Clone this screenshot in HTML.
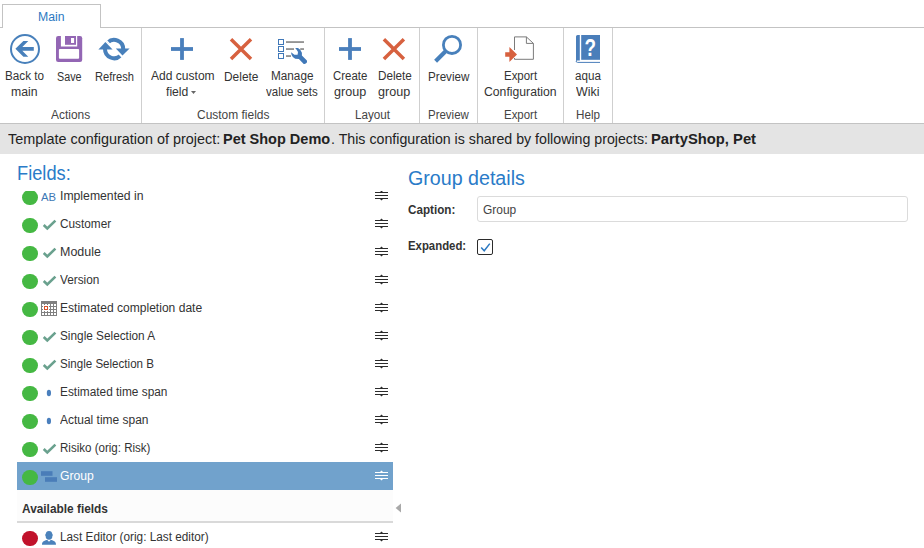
<!DOCTYPE html>
<html><head><meta charset="utf-8"><title>Template configuration</title>
<style>
*{box-sizing:border-box;margin:0;padding:0}
html,body{width:924px;height:548px;overflow:hidden;background:#fff}
body{font-family:"Liberation Sans",sans-serif;font-size:12px;color:#333;position:relative}
.abs{position:absolute}
#tabline{left:0;top:27px;width:924px;height:1px;background:#c3c3c3}
#tab{left:2px;top:4px;width:99px;height:24px;border:1px solid #c3c3c3;border-bottom:none;background:#fff}
.sep{position:absolute;top:28px;width:1px;height:95px;background:#cfcfcf}
.ico{position:absolute;overflow:visible}
#banner{left:0;top:123px;width:924px;height:31px;background:#e4e4e4;border-top:1px solid #c3c3c3}
.t{position:absolute;white-space:nowrap;transform-origin:0 50%;color:#333}
#list{position:absolute;left:17px;top:191px;width:376px;height:357px;overflow:hidden}
#list .in{position:absolute;left:-17px;top:-191px;width:924px;height:548px}
.row{position:absolute;left:17px;width:376px;height:28px}
.row .dot{position:absolute;left:5.4px;top:7.5px;width:15.3px;height:15.3px;border-radius:50%;background:#45b843}
.row .dot.red{background:#c1122b}
.row svg.ti{position:absolute;left:23px;top:6px;width:18px;height:18px;overflow:visible}
.row svg.hd{position:absolute;left:357px;top:7px;width:15px;height:14px;overflow:visible}
.row.sel{background:#71a2cc}
</style></head><body>
<div id="tabline" class="abs"></div><div id="tab" class="abs"></div>
<span class="t" style="left:38.22px;top:8.64px;font-size:12px;line-height:16px;transform:scaleX(1.0209);color:#2b79c2">Main</span>
<div class="sep" style="left:141px"></div>
<div class="sep" style="left:324px"></div>
<div class="sep" style="left:419px"></div>
<div class="sep" style="left:477px"></div>
<div class="sep" style="left:563px"></div>
<div class="sep" style="left:612px"></div>
<svg class="ico" style="left:0;top:28px" width="620" height="42" viewBox="0 28 620 42">
<g fill="#4880bb">
<circle cx="25" cy="49" r="14" fill="none" stroke="#4880bb" stroke-width="2"/>
<path d="M15.4 48.85 L23.4 41 L28.3 41 L22.3 47 L33.8 47 L33.8 50.7 L22.3 50.7 L28.3 56.7 L23.4 56.7 Z"/>
</g>
<g>
<rect x="56" y="36" width="26.2" height="26" rx="2.2" fill="#9366b4"/>
<rect x="60.9" y="35.5" width="16.3" height="11" fill="#fff"/>
<rect x="65" y="36" width="11" height="8.8" fill="#9366b4"/>
<rect x="71" y="38" width="3.1" height="5" fill="#fff"/>
<rect x="58.9" y="49.1" width="20.2" height="9.7" rx="1" fill="#fff"/>
</g>
<g fill="#4880bb">
<path d="M107.7 42.6 A9.1 9.1 0 0 1 123.2 49.1" fill="none" stroke="#4880bb" stroke-width="4"/>
<path d="M120.5 55.6 A9.1 9.1 0 0 1 105 49.1" fill="none" stroke="#4880bb" stroke-width="4"/>
<path d="M98.4 49.6 L105.4 42 L112.6 49.6 Z"/>
<path d="M115.8 48.4 L129.6 48.4 L122.5 55.4 Z"/>
<path d="M105.4 39.6 L122.4 57.4" stroke="#fff" stroke-width="1.4" fill="none"/>
</g>
<g fill="#4a7fbc">
<rect x="171" y="47.1" width="22" height="3.8"/><rect x="180.1" y="38.1" width="3.8" height="21.8"/>
<rect x="339" y="47.1" width="22" height="3.8"/><rect x="348.1" y="38.1" width="3.8" height="21.8"/>
</g>
<g stroke="#d7613f" stroke-width="3.5" fill="none">
<path d="M231 39.2 L251 58.9 M251 39.2 L231 58.9"/>
<path d="M383.9 39.2 L403.9 58.9 M403.9 39.2 L383.9 58.9"/>
</g>
<g>
<g fill="#fff" stroke="#4078b8" stroke-width="1"><rect x="278.5" y="39.5" width="5" height="5"/><rect x="278.5" y="46.5" width="5" height="5"/><rect x="278.5" y="53.5" width="5" height="5"/></g>
<g fill="#7b7b7b"><rect x="286" y="41.3" width="18" height="1.5"/><rect x="286" y="48.3" width="8" height="1.5"/><rect x="300.2" y="48.3" width="3.8" height="1.5"/><rect x="286" y="55.3" width="5" height="1.5"/></g>
<path fill="#4078b8" d="M295.2 48 L298 48 Q300.5 49 301.9 52.8 L301.9 55.6 L306.9 60.5 Q307.6 62.5 306.1 63.3 Q304.8 64.5 303.7 63.9 L298.9 59 L295.2 58.7 Q292.8 58 291.6 55 L291 52.2 L294.4 54.8 L297.6 54.8 L298 52 L296.8 50 Z"/>
</g>
<g>
<circle cx="452" cy="44.9" r="8.6" fill="none" stroke="#4880bb" stroke-width="2.8"/>
<path d="M445.6 51.3 L435.6 61.3" stroke="#4880bb" stroke-width="4.2" fill="none"/>
</g>
<g>
<path d="M514.5 50 V36.9 H526.4 L533.4 43.4 V59.3 H514.5 V58" fill="none" stroke="#7b7b7b" stroke-width="1"/>
<path d="M526.4 36.9 V43.4 H533.4" fill="none" stroke="#7b7b7b" stroke-width="1"/>
<path fill="#d7613f" d="M505.2 52.2 H509.4 V47 L517 54.45 L509.4 61.9 V56.7 H505.2 Z"/>
</g>
<g>
<path fill="#4a7eba" d="M577.6 35 H579.8 V60.5 H577.2 Q576 60.5 576 62 V36.6 Q576 35 577.6 35 Z"/>
<rect x="581.2" y="35" width="18.8" height="24.8" fill="#4a7eba"/>
<path d="M600 62.4 H577.6 Q576.1 62.4 576.1 61" fill="none" stroke="#4a7eba" stroke-width="1"/>
<text x="590.2" y="56.2" text-anchor="middle" font-family="Liberation Sans, sans-serif" font-weight="bold" font-size="23" fill="#fff" transform="translate(590.2 0) scale(.82 1) translate(-590.2 0)">?</text>
</g>
</svg>

<span class="t" style="left:5.22px;top:67.84px;font-size:12px;line-height:16px;transform:scaleX(0.9757)">Back to</span>
<span class="t" style="left:11.22px;top:84.24px;font-size:12px;line-height:16px;transform:scaleX(1.0209)">main</span>
<span class="t" style="left:56.62px;top:68.54px;font-size:12px;line-height:16px;transform:scaleX(0.8977)">Save</span>
<span class="t" style="left:95.02px;top:68.54px;font-size:12px;line-height:16px;transform:scaleX(0.9246)">Refresh</span>
<span class="t" style="left:150.82px;top:67.84px;font-size:12px;line-height:16px;transform:scaleX(1.0045)">Add custom</span>
<span class="t" style="left:165.82px;top:83.84px;font-size:12px;line-height:16px;transform:scaleX(1.0156)">field</span>
<span class="t" style="left:224.22px;top:68.54px;font-size:12px;line-height:16px;transform:scaleX(0.9934)">Delete</span>
<span class="t" style="left:271.12px;top:67.84px;font-size:12px;line-height:16px;transform:scaleX(0.9789)">Manage</span>
<span class="t" style="left:266.02px;top:83.84px;font-size:12px;line-height:16px;transform:scaleX(0.9580)">value sets</span>
<span class="t" style="left:333.02px;top:67.84px;font-size:12px;line-height:16px;transform:scaleX(0.9508)">Create</span>
<span class="t" style="left:333.72px;top:83.84px;font-size:12px;line-height:16px;transform:scaleX(1.0475)">group</span>
<span class="t" style="left:377.52px;top:67.84px;font-size:12px;line-height:16px;transform:scaleX(0.9761)">Delete</span>
<span class="t" style="left:378.02px;top:83.84px;font-size:12px;line-height:16px;transform:scaleX(1.0475)">group</span>
<span class="t" style="left:427.72px;top:68.54px;font-size:12px;line-height:16px;transform:scaleX(0.9689)">Preview</span>
<span class="t" style="left:504.12px;top:67.84px;font-size:12px;line-height:16px;transform:scaleX(0.9531)">Export</span>
<span class="t" style="left:483.92px;top:83.84px;font-size:12px;line-height:16px;transform:scaleX(1.0178)">Configuration</span>
<span class="t" style="left:574.82px;top:67.84px;font-size:12px;line-height:16px;transform:scaleX(0.9684)">aqua</span>
<span class="t" style="left:576.02px;top:83.84px;font-size:12px;line-height:16px;transform:scaleX(1.0348)">Wiki</span>
<svg class="abs" style="left:191px;top:91px" width="5" height="3" viewBox="0 0 5 3"><path d="M0 0H5L2.5 3Z" fill="#666"/></svg>
<span class="t" style="left:50.62px;top:107.04px;font-size:12px;line-height:16px;transform:scaleX(0.9949);color:#444">Actions</span>
<span class="t" style="left:197.12px;top:107.04px;font-size:12px;line-height:16px;transform:scaleX(0.9967);color:#444">Custom fields</span>
<span class="t" style="left:354.72px;top:107.04px;font-size:12px;line-height:16px;transform:scaleX(0.9730);color:#444">Layout</span>
<span class="t" style="left:428.22px;top:107.04px;font-size:12px;line-height:16px;transform:scaleX(0.9572);color:#444">Preview</span>
<span class="t" style="left:504.12px;top:107.04px;font-size:12px;line-height:16px;transform:scaleX(0.9531);color:#444">Export</span>
<span class="t" style="left:576.02px;top:107.04px;font-size:12px;line-height:16px;transform:scaleX(0.9705);color:#444">Help</span>
<div id="banner" class="abs"></div>
<span class="t" style="left:7.83px;top:130.05px;font-size:14.3px;line-height:19px;transform:scaleX(1.0078);color:#222">Template configuration of project:</span>
<span class="t" style="left:223.23px;top:130.05px;font-size:14.3px;line-height:19px;transform:scaleX(1.0141);font-weight:bold;color:#222">Pet Shop Demo</span>
<span class="t" style="left:330.63px;top:130.05px;font-size:14.3px;line-height:19px;transform:scaleX(0.9929);color:#222">. This configuration is shared by following projects:</span>
<span class="t" style="left:650.93px;top:130.05px;font-size:14.3px;line-height:19px;transform:scaleX(1.0328);font-weight:bold;color:#222">PartyShop, Pet</span>
<span class="t" style="left:17.02px;top:159.84px;font-size:19.5px;line-height:26px;transform:scaleX(0.9360);color:#2a7bc8">Fields:</span>
<span class="t" style="left:408.02px;top:164.84px;font-size:19.5px;line-height:26px;transform:scaleX(1.0075);color:#2a7bc8">Group details</span>
<div id="list"><div class="in">
<div class="row" style="top:182px"><i class="dot"></i><svg class="hd" viewBox="0 0 15 14"><g fill="#2c2c2c"><rect x="1" y="3" width="13" height="1"/><rect x="1" y="6" width="13" height="1"/><rect x="1" y="9" width="13" height="1"/><path d="M6 3 L7.5 1.6 L9 3Z"/><path d="M6 10 L7.5 11.6 L9 10Z"/></g></svg></div><span class="t" style="left:41.36px;top:189.59px;font-size:11px;line-height:15px;transform:scaleX(1.0267);color:#3d78b5">AB</span><span class="t" style="left:60.02px;top:187.84px;font-size:12px;line-height:16px;transform:scaleX(1.0184)">Implemented in</span>
<div class="row" style="top:210px"><i class="dot"></i><svg class="ti" viewBox="0 0 18 18"><path d="M3.7 9.0 L7.3 12.5 L15.4 4.6" fill="none" stroke="#6aa18e" stroke-width="2.6"/></svg><svg class="hd" viewBox="0 0 15 14"><g fill="#2c2c2c"><rect x="1" y="3" width="13" height="1"/><rect x="1" y="6" width="13" height="1"/><rect x="1" y="9" width="13" height="1"/><path d="M6 3 L7.5 1.6 L9 3Z"/><path d="M6 10 L7.5 11.6 L9 10Z"/></g></svg></div><span class="t" style="left:60.02px;top:215.84px;font-size:12px;line-height:16px;transform:scaleX(0.9836)">Customer</span>
<div class="row" style="top:238px"><i class="dot"></i><svg class="ti" viewBox="0 0 18 18"><path d="M3.7 9.0 L7.3 12.5 L15.4 4.6" fill="none" stroke="#6aa18e" stroke-width="2.6"/></svg><svg class="hd" viewBox="0 0 15 14"><g fill="#2c2c2c"><rect x="1" y="3" width="13" height="1"/><rect x="1" y="6" width="13" height="1"/><rect x="1" y="9" width="13" height="1"/><path d="M6 3 L7.5 1.6 L9 3Z"/><path d="M6 10 L7.5 11.6 L9 10Z"/></g></svg></div><span class="t" style="left:60.02px;top:243.84px;font-size:12px;line-height:16px;transform:scaleX(1.0381)">Module</span>
<div class="row" style="top:266px"><i class="dot"></i><svg class="ti" viewBox="0 0 18 18"><path d="M3.7 9.0 L7.3 12.5 L15.4 4.6" fill="none" stroke="#6aa18e" stroke-width="2.6"/></svg><svg class="hd" viewBox="0 0 15 14"><g fill="#2c2c2c"><rect x="1" y="3" width="13" height="1"/><rect x="1" y="6" width="13" height="1"/><rect x="1" y="9" width="13" height="1"/><path d="M6 3 L7.5 1.6 L9 3Z"/><path d="M6 10 L7.5 11.6 L9 10Z"/></g></svg></div><span class="t" style="left:60.02px;top:271.84px;font-size:12px;line-height:16px;transform:scaleX(0.9832)">Version</span>
<div class="row" style="top:294px"><i class="dot"></i><svg class="ti" viewBox="0 0 18 18"><rect x="1" y="1" width="16" height="15" fill="#808080"/><rect x="2" y="4" width="2" height="2" fill="#fff"/><rect x="2" y="7" width="2" height="2" fill="#fff"/><rect x="2" y="10" width="2" height="2" fill="#fff"/><rect x="2" y="13" width="2" height="2" fill="#fff"/><rect x="5" y="4" width="2" height="2" fill="#fff"/><rect x="5" y="7" width="2" height="2" fill="#fff"/><rect x="5" y="10" width="2" height="2" fill="#fff"/><rect x="5" y="13" width="2" height="2" fill="#fff"/><rect x="8" y="4" width="2" height="2" fill="#fff"/><rect x="8" y="7" width="2" height="2" fill="#fff"/><rect x="8" y="10" width="2" height="2" fill="#fff"/><rect x="8" y="13" width="2" height="2" fill="#fff"/><rect x="11" y="4" width="2" height="2" fill="#fff"/><rect x="11" y="7" width="2" height="2" fill="#fff"/><rect x="11" y="10" width="2" height="2" fill="#fff"/><rect x="11" y="13" width="2" height="2" fill="#fff"/><rect x="14" y="4" width="2" height="2" fill="#fff"/><rect x="14" y="7" width="2" height="2" fill="#fff"/><rect x="14" y="10" width="2" height="2" fill="#fff"/><rect x="14" y="13" width="2" height="2" fill="#fff"/><rect x="3" y="5" width="6" height="6" fill="#fff"/><rect x="4.5" y="6.5" width="3" height="3" fill="none" stroke="#d9532c" stroke-width="1"/></svg><svg class="hd" viewBox="0 0 15 14"><g fill="#2c2c2c"><rect x="1" y="3" width="13" height="1"/><rect x="1" y="6" width="13" height="1"/><rect x="1" y="9" width="13" height="1"/><path d="M6 3 L7.5 1.6 L9 3Z"/><path d="M6 10 L7.5 11.6 L9 10Z"/></g></svg></div><span class="t" style="left:60.02px;top:299.84px;font-size:12px;line-height:16px;transform:scaleX(1.0052)">Estimated completion date</span>
<div class="row" style="top:322px"><i class="dot"></i><svg class="ti" viewBox="0 0 18 18"><path d="M3.7 9.0 L7.3 12.5 L15.4 4.6" fill="none" stroke="#6aa18e" stroke-width="2.6"/></svg><svg class="hd" viewBox="0 0 15 14"><g fill="#2c2c2c"><rect x="1" y="3" width="13" height="1"/><rect x="1" y="6" width="13" height="1"/><rect x="1" y="9" width="13" height="1"/><path d="M6 3 L7.5 1.6 L9 3Z"/><path d="M6 10 L7.5 11.6 L9 10Z"/></g></svg></div><span class="t" style="left:60.02px;top:327.84px;font-size:12px;line-height:16px;transform:scaleX(0.9837)">Single Selection A</span>
<div class="row" style="top:350px"><i class="dot"></i><svg class="ti" viewBox="0 0 18 18"><path d="M3.7 9.0 L7.3 12.5 L15.4 4.6" fill="none" stroke="#6aa18e" stroke-width="2.6"/></svg><svg class="hd" viewBox="0 0 15 14"><g fill="#2c2c2c"><rect x="1" y="3" width="13" height="1"/><rect x="1" y="6" width="13" height="1"/><rect x="1" y="9" width="13" height="1"/><path d="M6 3 L7.5 1.6 L9 3Z"/><path d="M6 10 L7.5 11.6 L9 10Z"/></g></svg></div><span class="t" style="left:60.02px;top:355.84px;font-size:12px;line-height:16px;transform:scaleX(0.9646)">Single Selection B</span>
<div class="row" style="top:378px"><i class="dot"></i><svg class="ti" viewBox="0 0 18 18"><ellipse cx="8.9" cy="9" rx="2.1" ry="3.2" fill="#4a7fbd"/></svg><svg class="hd" viewBox="0 0 15 14"><g fill="#2c2c2c"><rect x="1" y="3" width="13" height="1"/><rect x="1" y="6" width="13" height="1"/><rect x="1" y="9" width="13" height="1"/><path d="M6 3 L7.5 1.6 L9 3Z"/><path d="M6 10 L7.5 11.6 L9 10Z"/></g></svg></div><span class="t" style="left:60.02px;top:383.84px;font-size:12px;line-height:16px;transform:scaleX(0.9884)">Estimated time span</span>
<div class="row" style="top:406px"><i class="dot"></i><svg class="ti" viewBox="0 0 18 18"><ellipse cx="8.9" cy="9" rx="2.1" ry="3.2" fill="#4a7fbd"/></svg><svg class="hd" viewBox="0 0 15 14"><g fill="#2c2c2c"><rect x="1" y="3" width="13" height="1"/><rect x="1" y="6" width="13" height="1"/><rect x="1" y="9" width="13" height="1"/><path d="M6 3 L7.5 1.6 L9 3Z"/><path d="M6 10 L7.5 11.6 L9 10Z"/></g></svg></div><span class="t" style="left:60.02px;top:411.84px;font-size:12px;line-height:16px;transform:scaleX(0.9971)">Actual time span</span>
<div class="row" style="top:434px"><i class="dot"></i><svg class="ti" viewBox="0 0 18 18"><path d="M3.7 9.0 L7.3 12.5 L15.4 4.6" fill="none" stroke="#6aa18e" stroke-width="2.6"/></svg><svg class="hd" viewBox="0 0 15 14"><g fill="#2c2c2c"><rect x="1" y="3" width="13" height="1"/><rect x="1" y="6" width="13" height="1"/><rect x="1" y="9" width="13" height="1"/><path d="M6 3 L7.5 1.6 L9 3Z"/><path d="M6 10 L7.5 11.6 L9 10Z"/></g></svg></div><span class="t" style="left:60.02px;top:439.84px;font-size:12px;line-height:16px;transform:scaleX(0.9622)">Risiko (orig: Risk)</span>
<div class="row sel" style="top:462px"><i class="dot"></i><svg class="ti" viewBox="0 0 18 18"><rect x="1" y="3.2" width="11.5" height="4.6" fill="#4a7db8"/><rect x="5" y="9.2" width="12" height="4.6" fill="#4a7db8"/></svg><svg class="hd" viewBox="0 0 15 14"><g fill="#fff"><rect x="1" y="3" width="13" height="1"/><rect x="1" y="6" width="13" height="1"/><rect x="1" y="9" width="13" height="1"/><path d="M6 3 L7.5 1.6 L9 3Z"/><path d="M6 10 L7.5 11.6 L9 10Z"/></g></svg></div><span class="t" style="left:60.02px;top:467.84px;font-size:12px;line-height:16px;transform:scaleX(1.0150);color:#fff">Group</span>
<div class="abs" style="left:17px;top:490px;width:376px;height:31px;background:#fcfcfc"></div>
<span class="t" style="left:22.02px;top:501.14px;font-size:12px;line-height:16px;transform:scaleX(0.9888);font-weight:bold">Available fields</span>
<div class="abs" style="left:17px;top:521px;width:376px;height:2px;background:#d9d9d9"></div>
<div class="row" style="top:523px"><i class="dot red"></i><svg class="ti" viewBox="0 0 18 18"><g fill="#4b82bb"><ellipse cx="9" cy="6.4" rx="3.4" ry="4.4"/><ellipse cx="9" cy="6" rx="3.9" ry="1.1"/><path d="M2 15.8 C2 12.6 4 12 6.6 11.1 L7.3 11.1 L9 12.8 L10.7 11.1 L11.4 11.1 C14 12 16 12.6 16 15.8Z"/></g></svg><svg class="hd" viewBox="0 0 15 14"><g fill="#2c2c2c"><rect x="1" y="3" width="13" height="1"/><rect x="1" y="6" width="13" height="1"/><rect x="1" y="9" width="13" height="1"/><path d="M6 3 L7.5 1.6 L9 3Z"/><path d="M6 10 L7.5 11.6 L9 10Z"/></g></svg></div><span class="t" style="left:60.02px;top:528.84px;font-size:12px;line-height:16px;transform:scaleX(0.9819)">Last Editor (orig: Last editor)</span>
</div></div>
<svg class="abs" style="left:395px;top:503px" width="7" height="10" viewBox="0 0 7 10"><path d="M6 0.5V9.5L0.6 5Z" fill="#a9a9a9"/></svg>
<span class="t" style="left:408.32px;top:201.64px;font-size:12px;line-height:16px;transform:scaleX(0.9713);font-weight:bold">Caption:</span>
<div class="abs" style="left:477px;top:196px;width:431px;height:26px;border:1px solid #dbdbdb;border-radius:3px"></div>
<span class="t" style="left:483.12px;top:201.64px;font-size:12px;line-height:16px;transform:scaleX(0.9970);color:#444">Group</span>
<span class="t" style="left:408.32px;top:238.14px;font-size:12px;line-height:16px;transform:scaleX(0.9481);font-weight:bold">Expanded:</span>
<div class="abs" style="left:476.5px;top:238.5px;width:16.5px;height:16.5px;border:1.2px solid #2b2b2b;border-radius:2px;background:#fff"><svg class="abs" style="left:0;top:0" width="15" height="15" viewBox="0 0 15 15"><path d="M3.2 7.6 L6.2 10.8 L11.8 3.6" fill="none" stroke="#2b79c2" stroke-width="1.5"/></svg></div>
</body></html>
